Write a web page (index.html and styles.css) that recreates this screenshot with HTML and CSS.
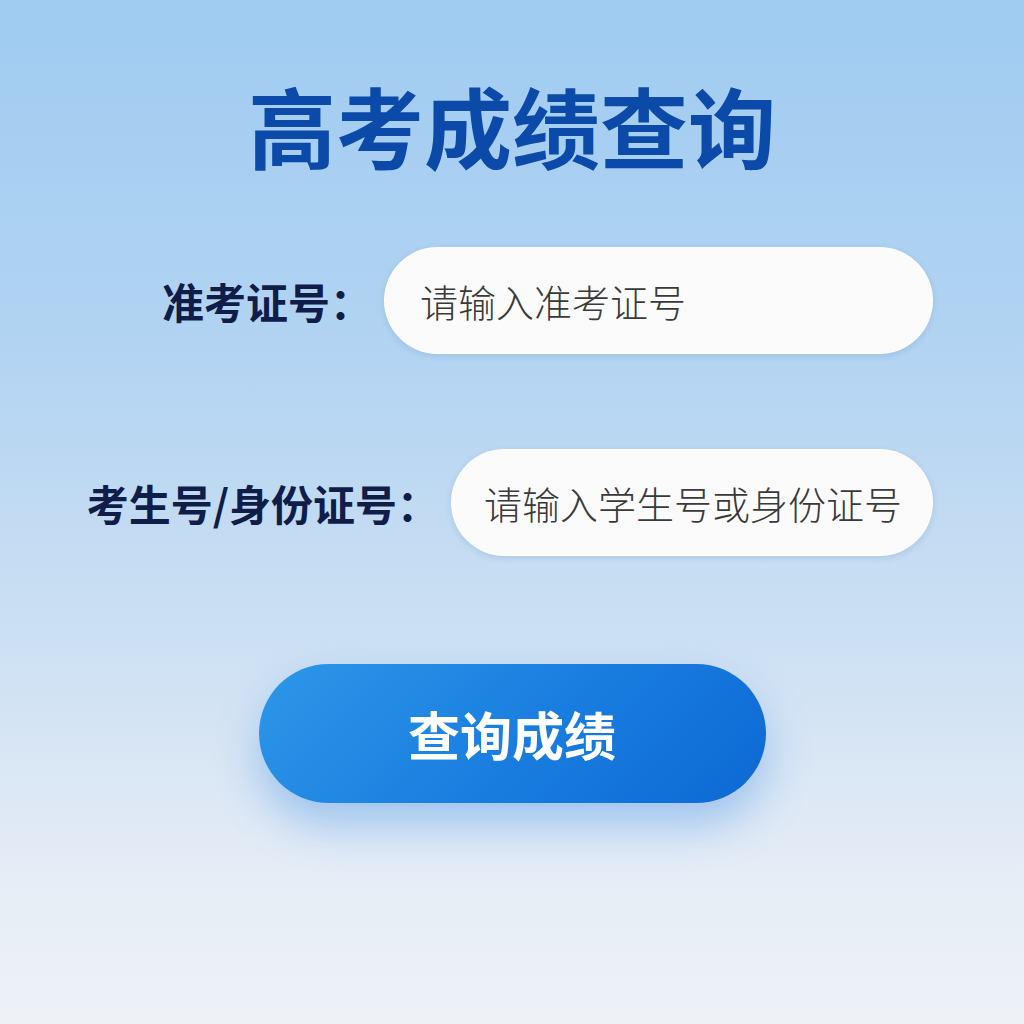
FILE: index.html
```html
<!DOCTYPE html>
<html lang="zh-CN">
<head>
  <meta charset="UTF-8">
  <meta name="viewport" content="width=device-width, initial-scale=1.0">
  <title>高考成绩查询</title>
  <link rel="stylesheet" href="styles.css">
</head>
<body class="page-background">
  <main class="query-page">
    <h1 class="page-title">高考成绩查询</h1>

    <form class="query-form" onsubmit="return false;">
      <div class="form-row">
        <label class="form-label" for="exam-id">准考证号：</label>
        <input class="form-input input-wide" id="exam-id" type="text" placeholder="请输入准考证号">
      </div>

      <div class="form-row">
        <label class="form-label" for="student-id">考生号/身份证号：</label>
        <input class="form-input" id="student-id" type="text" placeholder="请输入学生号或身份证号">
      </div>

      <div class="form-actions">
        <button class="query-button" type="submit">查询成绩</button>
      </div>
    </form>
  </main>
</body>
</html>
```

FILE: styles.css
```css
/* Base styles */
body {
  margin: 0;
  font-family: "Noto Sans CJK SC", "Noto Sans", sans-serif;
}

.page-background {
  min-height: 1024px;
  background: linear-gradient(180deg, #9fcbf1 0%, #b3d4f2 35%, #cfe1f3 65%, #e8eef6 88%, #eef2f7 100%);
}

.query-page {
  padding-top: 74px;
}

.page-title {
  margin: 0;
  text-align: center;
  font-size: 88px;
  line-height: 100px;
  font-weight: 700;
  color: #0b4aa8;
}

/* Form */
.query-form {
  margin-top: 73px;
  padding-right: 91px;
}

.form-row {
  display: flex;
  justify-content: flex-end;
  align-items: center;
  gap: 12px;
  margin-bottom: 95px;
}

.form-label {
  font-size: 42px;
  font-weight: 700;
  color: #0f1d48;
}

.form-input {
  box-sizing: border-box;
  width: 482px;
  height: 107px;
  padding: 0 32px;
  border: 1px solid rgba(255, 255, 255, 0.9);
  border-radius: 54px;
  background: #fbfbfc;
  box-shadow: 0 2px 6px rgba(60, 110, 170, 0.18);
  font-family: inherit;
  font-size: 38px;
  font-weight: 300;
  color: #333;
  outline: none;
}

.form-input.input-wide {
  width: 549px;
  padding-left: 35px;
}

.form-input::placeholder {
  color: #3a3a3a;
}

.form-actions {
  display: flex;
  justify-content: center;
  padding-left: 91px;
  margin-top: 108px;
}

.query-button {
  width: 507px;
  height: 139px;
  border: none;
  border-radius: 70px;
  background: linear-gradient(135deg, #2d97e8 0%, #1a7fe0 50%, #0d68d4 100%);
  box-shadow: 0 22px 44px rgba(40, 130, 225, 0.35);
  font-family: inherit;
  font-size: 52px;
  font-weight: 700;
  color: #fff;
  cursor: pointer;
}
```
